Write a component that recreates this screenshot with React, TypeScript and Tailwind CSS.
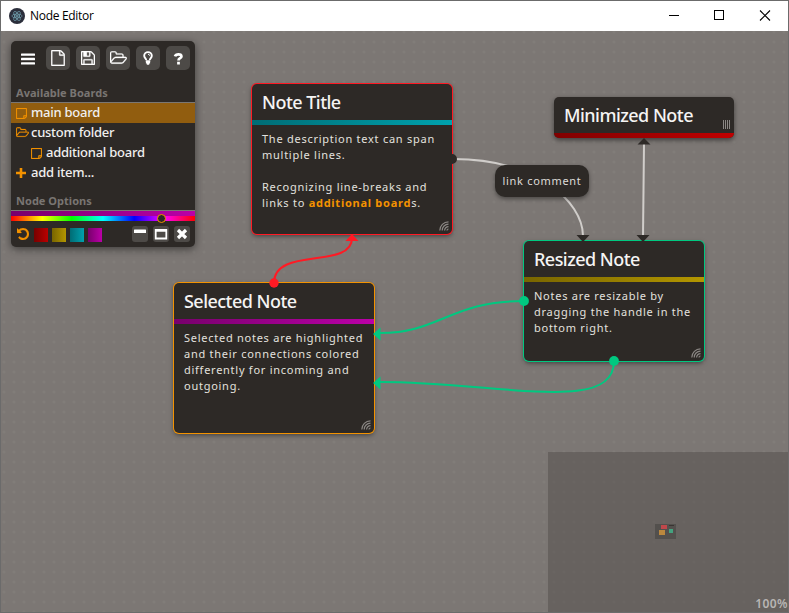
import type { ReactNode } from "react";

const icons = {
  file: "M1468 380q28 28 48 76t20 88v1152q0 40-28 68t-68 28h-1344q-40 0-68-28t-28-68v-1600q0-40 28-68t68-28h896q40 0 88 20t76 48zm-444-244v376h376q-10-29-22-41l-313-313q-12-12-41-22zm384 1528v-1024h-416q-40 0-68-28t-28-68v-416h-768v1536h1280z",
  save: "M512 1536h768v-384h-768v384zm896 0h128v-896q0-14-10-38.5t-20-34.5l-281-281q-10-10-34-20t-39-10v416q0 40-28 68t-68 28h-576q-40 0-68-28t-28-68v-416h-128v1280h128v-416q0-40 28-68t68-28h832q40 0 68 28t28 68v416zm-384-928v-320q0-13-9.5-22.5t-22.5-9.5h-192q-13 0-22.5 9.5t-9.5 22.5v320q0 13 9.5 22.5t22.5 9.5h192q13 0 22.5-9.5t9.5-22.5zm640 32v928q0 40-28 68t-68 28h-1344q-40 0-68-28t-28-68v-1344q0-40 28-68t68-28h928q40 0 88 20t76 48l280 280q28 28 48 76t20 88z",
  folder: "M1845 931q0-35-53-35h-1088q-40 0-85.5 21.5t-71.5 52.5l-294 363q-18 24-18 40 0 35 53 35h1088q40 0 86-22t71-53l294-363q18-22 18-39zm-1141-163h768v-160q0-40-28-68t-68-28h-576q-40 0-68-28t-28-68v-64q0-40-28-68t-68-28h-320q-40 0-68 28t-28 68v853l256-315q44-53 116-87.5t140-34.5zm1269 163q0 62-46 120l-295 363q-43 53-116 87.5t-140 34.5h-1088q-92 0-158-66t-66-158v-960q0-92 66-158t158-66h320q92 0 158 66t66 158v32h544q92 0 158 66t66 158v160h192q54 0 99 24.5t67 70.5q15 32 15 68z",
  undo: "M1664 896q0 156-61 298t-164 245-245 164-298 61q-172 0-327-72.5t-264-204.5q-7-10-6.5-22.5t8.5-20.5l137-138q10-9 25-9 16 2 23 12 73 95 179 147t225 52q104 0 198.5-40.5t163.5-109.5 109.5-163.5 40.5-198.5-40.5-198.5-109.5-163.5-163.5-109.5-198.5-40.5q-98 0-188 35.5t-160 101.5l137 138q31 30 14 69-17 40-59 40h-448q-26 0-45-19t-19-45v-448q0-42 40-59 39-17 69 14l130 129q107-101 244.5-156.5t284.5-55.5q156 0 298 61t245 164 164 245 61 298z",
  note: "M1528 1280h-248v248q29-10 41-22l185-185q12-12 22-41zm-280-128h288v-896h-1280v1280h896v-288q0-40 28-68t68-28zm416-928v1024q0 40-20 88t-48 76l-184 184q-28 28-76 48t-88 20h-1024q-40 0-68-28t-28-68v-1344q0-40 28-68t68-28h1344q40 0 68 28t28 68z",
};

function Glyph({ d, box, className }: { d: string; box: string; className: string }) {
  return (
    <svg viewBox={box} className={`block shrink-0 fill-current ${className}`}>
      <path d={d} stroke="currentColor" strokeWidth="30" />
    </svg>
  );
}

function ToolButton({ children, plain }: { children: ReactNode; plain?: boolean }) {
  return (
    <button className={`flex size-6 items-center justify-center rounded-[5px] ${plain ? "" : "bg-[#4d4a47]"}`}>
      {children}
    </button>
  );
}

function TitleBar() {
  return (
    <header className="flex h-[30px] items-center bg-white text-black">
      <svg viewBox="0 0 16 16" className="ml-2 size-4">
        <circle cx="8" cy="8" r="8" fill="#2b2e3b" />
        <g fill="none" stroke="#9feaf9" strokeWidth=".6" opacity=".7">
          <ellipse cx="8" cy="8" rx="5.2" ry="2" transform="rotate(0 8 8)" />
          <ellipse cx="8" cy="8" rx="5.2" ry="2" transform="rotate(60 8 8)" />
          <ellipse cx="8" cy="8" rx="5.2" ry="2" transform="rotate(120 8 8)" />
        </g>
        <circle cx="8" cy="8" r=".8" fill="#9feaf9" />
      </svg>
      <span className="ml-[5px] flex-1 font-['Open_Sans',sans-serif] text-[12px] leading-4 tracking-[-0.3px]">Node Editor</span>
      <svg viewBox="0 0 138 30" className="h-[30px] w-[138px]" fill="none" stroke="black" shapeRendering="crispEdges">
        <path d="M19 14.5h10M64.5 9.5h9v9h-9z" />
        <path d="M110 9.5l10 10M120 9.5l-10 10" shapeRendering="auto" strokeWidth="1.1" />
      </svg>
    </header>
  );
}

function BoardRow({ icon, label, active, nested }: { icon: ReactNode; label: string; active?: boolean; nested?: boolean }) {
  return (
    <li className={`flex h-5 items-center ${nested ? "pl-5" : "pl-[5px]"} ${active ? "bg-[#915d0f]" : ""}`}>
      <span className="flex w-[15px] text-[#f39200]">{icon}</span>
      <span className="-mt-[2px] whitespace-nowrap text-[13px] font-medium leading-5 tracking-[-0.25px] text-[#f0efee]">{label}</span>
    </li>
  );
}

function MiniButton({ children }: { children: ReactNode }) {
  return (
    <button className="size-4 rounded-[3px] bg-[#4d4a47]">
      <svg viewBox="0 0 16 16" className="block size-4">{children}</svg>
    </button>
  );
}

function Panel() {
  const note = <Glyph d={icons.note} box="128 128 1536 1536" className="size-[11px]" />;
  return (
    <aside className="absolute left-[10px] top-[10px] h-[206px] w-[184px] overflow-hidden rounded-[5px] bg-[#2d2926] shadow-[0_2px_8px_rgba(0,0,0,.5)]">
      <div className="flex gap-[6px] px-[5px] pt-[5px] text-white">
        <ToolButton plain>
          <svg viewBox="0 0 14 12" className="mt-px h-3 w-[14px] fill-current">
            <rect y=".4" width="14" height="2.4" rx=".5" />
            <rect y="4.8" width="14" height="2.4" rx=".5" />
            <rect y="9.2" width="14" height="2.4" rx=".5" />
          </svg>
        </ToolButton>
        <ToolButton><Glyph d={icons.file} box="0 0 1536 1792" className="h-4 w-[14px]" /></ToolButton>
        <ToolButton><Glyph d={icons.save} box="128 128 1536 1536" className="size-[14px]" /></ToolButton>
        <ToolButton><Glyph d={icons.folder} box="64 128 1920 1536" className="h-[14px] w-[17px]" /></ToolButton>
        <ToolButton>
          <svg viewBox="0 0 12 16" className="h-4 w-3" fill="none" stroke="currentColor" strokeWidth="1.9">
            <path d="M4.200 10C4 8.200 2.200 7.700 2.200 5.700a3.800 3.600 0 0 1 7.600 0C9.800 7.700 8 8.200 7.800 10" />
            <path d="M3.700 11h4.600M3.900 12.600h4.200M4.800 13.900h2.400" strokeWidth="1.700" />
            <path d="M6 4.200q1.500.1 1.700 1.500" strokeWidth="1" />
          </svg>
        </ToolButton>
        <ToolButton>
          <svg viewBox="0 0 12 14" className="h-[13px] w-[11px]" fill="none" stroke="currentColor" strokeWidth="3">
            <path d="M2.200 4.800C3.100 1.700 9.200 1.500 9.200 4.700 9.200 6.900 6 6.400 6 9.200M6 10.600v3" />
          </svg>
        </ToolButton>
      </div>
      <h2 className="mt-[14px] h-[19px] border-b border-[#7b7773] pl-[5px] text-[11px] font-bold leading-[17px] tracking-[0.03px] text-[#797572]">Available Boards</h2>
      <ul>
        <BoardRow icon={note} label="main board" active />
        <BoardRow icon={<Glyph d={icons.folder} box="64 128 1920 1536" className="-mt-px h-[11px] w-[13px]" />} label="custom folder" />
        <BoardRow icon={note} label="additional board" nested />
        <BoardRow
          icon={<svg viewBox="0 0 10 10" className="-mt-px size-[10px]"><path d="M5 0v10M0 5h10" stroke="currentColor" strokeWidth="2.600" /></svg>}
          label="add item..."
        />
      </ul>
      <h2 className="mt-[9px] h-[19px] border-b border-[#7b7773] pl-[5px] text-[11px] font-bold leading-[17px] tracking-[0.03px] text-[#797572]">Node Options</h2>
      <div className="h-[5px] bg-[linear-gradient(90deg,#78006c,#bb00a8)]" />
      <div className="relative h-[5px] bg-[linear-gradient(90deg,#f00,#ff0_17%,#0f0_33%,#0ff_50%,#00f_67%,#f0f_83%,#f00)]">
        <span className="absolute left-[146px] top-[-2px] size-[9px] rounded-full border border-[#f39200] bg-[#2d2926]" />
      </div>
      <div className="flex items-start px-[5px] pt-[5px]">
        <Glyph d={icons.undo} box="128 128 1536 1536" className="ml-px mt-[2px] size-3 text-[#f39200]" />
        <div className="ml-[5px] mt-[2px] flex flex-1 gap-1">
          <span className="size-[14px] bg-[linear-gradient(90deg,#780000,#bb0000)]" />
          <span className="size-[14px] bg-[linear-gradient(90deg,#786500,#b39600)]" />
          <span className="size-[14px] bg-[linear-gradient(90deg,#006c75,#00a2ae)]" />
          <span className="size-[14px] bg-[linear-gradient(90deg,#78006c,#bb00a8)]" />
        </div>
        <div className="flex gap-[5px]">
          <MiniButton><rect x="2" y="3.500" width="12" height="3.500" rx=".5" fill="white" /></MiniButton>
          <MiniButton><path d="M2.700 3.800h10.600v8.700H2.700zM2 4.800h12" fill="none" stroke="white" strokeWidth="1.800" /></MiniButton>
          <MiniButton><path d="M4 4l8 8M12 4l-8 8" stroke="white" strokeWidth="3.200" /></MiniButton>
        </div>
      </div>
    </aside>
  );
}

function ResizeHandle() {
  return (
    <svg viewBox="0 0 10 10" className="absolute bottom-[3px] right-[3px] size-[10px]" fill="none" stroke="#8b8784" strokeWidth="1.200">
      <path d="M.8 9.500A8.700 8.700 0 0 1 9.500.8M3.200 9.500a6.300 6.300 0 0 1 6.300-6.300M5.600 9.500a3.900 3.900 0 0 1 3.900-3.900M8 9.500A1.500 1.500 0 0 1 9.500 8" />
    </svg>
  );
}

function Note({ title, place, bar, children }: { title: string; place: string; bar: string; children?: ReactNode }) {
  return (
    <article className={`absolute rounded-[5px] bg-[#2d2926] shadow-[0_2px_5px_rgba(0,0,0,.5)] ${place}`}>
      <h3 className="h-9 whitespace-nowrap pl-[10px] text-[18px] font-medium leading-9 tracking-[-0.53px] text-[#f5f4f3]">{title}</h3>
      <div className={`h-[5px] ${bar}`} />
      {children && (
        <p className="whitespace-nowrap pl-[10px] pt-[6px] text-[11px] leading-4 tracking-[0.74px] text-[#e3e1df]">{children}</p>
      )}
      {children ? (
        <ResizeHandle />
      ) : (
        <svg viewBox="0 0 8 9" className="absolute right-[3px] top-[23px] h-[9px] w-2" stroke="#8b8784" shapeRendering="crispEdges">
          <path d="M.5 0v9M2.500 0v9M4.500 0v9M6.500 0v9" />
        </svg>
      )}
    </article>
  );
}

function Links() {
  return (
    <svg viewBox="1 31 787 581" className="pointer-events-none absolute inset-0 h-[581px] w-[787px]" fill="none" strokeWidth="2">
      <g stroke="#ff1a24">
        <path d="M274 283C274 246 352 270 352 238" />
        <circle cx="274" cy="283" r="4.700" fill="#ff1a24" stroke="none" />
        <path d="M352 234l6.500 7h-13z" fill="#ff1a24" stroke="none" />
      </g>
      <g stroke="#00c880">
        <path d="M524 301C450 301 440 333 380 333M614 361C614 415 500 382 380 382" />
        <circle cx="524" cy="301" r="4.900" fill="#00c880" stroke="none" />
        <circle cx="614" cy="361" r="4.900" fill="#00c880" stroke="none" />
        <path d="M373 334l7.500-6.500v13zM373 383l7.500-6.500v13z" fill="#00c880" stroke="none" />
      </g>
      <path d="M453 159C535 159 583 201 583 236M644 144L643 236" stroke="#d0cdca" />
      <g fill="#2d2926">
        <path d="M452 154a5 5 0 0 1 0 10zM644 138l6.500 6.500h-13zM583 242l6.500-7h-13zM643 242l6.500-7h-13z" />
      </g>
    </svg>
  );
}

export default function App() {
  return (
    <div className="flex h-[613px] w-[789px] flex-col overflow-hidden border border-[#6b6b6b] font-['Noto_Sans',sans-serif]">
      <TitleBar />
      <main className="relative flex-1 overflow-hidden bg-[#7c7774] bg-[radial-gradient(circle,#817d79_1px,transparent_1.9px)] bg-size-[10px_10px] bg-position-[-2px_-4px]">
        <Note title="Note Title" place="left-[251px] top-[53px] h-[150px] w-[200px] ring-1 ring-[#ff1a24]" bar="bg-[linear-gradient(90deg,#006c75,#00a2ae)]">
          The description text can span<br />multiple lines.<br /><br />Recognizing line-breaks and<br />links to <b className="text-[#f39200]">additional board</b>s.
        </Note>
        <Note title="Minimized Note" place="left-[553px] top-[66px] h-[41px] w-[180px] overflow-hidden" bar="bg-[linear-gradient(90deg,#800000,#c00000)]" />
        <Note title="Selected Note" place="left-[173px] top-[252px] h-[150px] w-[200px] ring-1 ring-[#f39200]" bar="bg-[linear-gradient(90deg,#78006c,#bb00a8)]">
          Selected notes are highlighted<br />and their connections colored<br />differently for incoming and<br />outgoing.
        </Note>
        <Note title="Resized Note" place="left-[523px] top-[210px] h-[120px] w-[180px] ring-1 ring-[#00c880]" bar="bg-[linear-gradient(90deg,#786500,#b39600)]">
          Notes are resizable by<br />dragging the handle in the<br />bottom right.
        </Note>
        <Links />
        <div className="absolute left-[494px] top-[134px] flex h-8 w-[94px] items-center justify-center whitespace-nowrap rounded-[10px] bg-[#2d2926] text-[11px] tracking-[0.7px] text-[#dddbd9] shadow-[0_2px_4px_rgba(0,0,0,.4)]">link comment</div>
        <Panel />
        <div className="absolute bottom-0 right-0 h-[160px] w-[240px] bg-[#4d4946]/45">
          <div className="absolute left-[107px] top-[72px] h-[15px] w-[21px] bg-[#53504d]">
            <span className="absolute left-[6px] top-px h-1 w-[6px] bg-[#bf484b]" />
            <span className="absolute left-[14px] top-px h-px w-[5px] bg-[#393532]" />
            <span className="absolute left-1 top-[6px] h-[5px] w-[6px] bg-[#bb883e]" />
            <span className="absolute left-[14px] top-[5px] size-1 bg-[#44a27f]" />
          </div>
          <span className="absolute bottom-0 right-0 text-[12px] font-semibold leading-[17px] tracking-[0.4px] text-[#b8b5b3]">100%</span>
        </div>
      </main>
    </div>
  );
}
